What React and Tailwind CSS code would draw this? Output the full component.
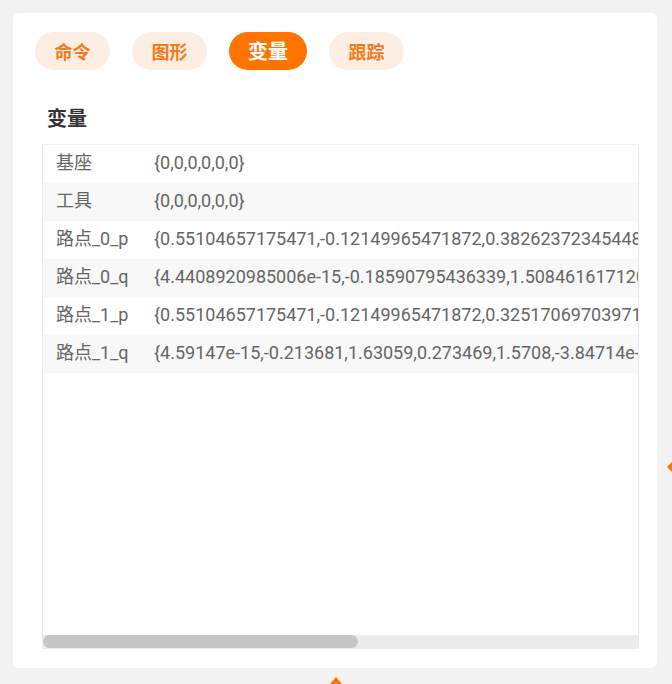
import React from 'react';

const tabs = ['命令', '图形', '变量', '跟踪'];

const rows = [
  ['基座', '{0,0,0,0,0,0}'],
  ['工具', '{0,0,0,0,0,0}'],
  ['路点_0_p', '{0.55104657175471,-0.12149965471872,0.38262372345448,3.1415926,0,1.5707963}'],
  ['路点_0_q', '{4.4408920985006e-15,-0.18590795436339,1.5084616171206,0.2483247,1.5708,0}'],
  ['路点_1_p', '{0.55104657175471,-0.12149965471872,0.32517069703971,3.1415926,0,1.5707963}'],
  ['路点_1_q', '{4.59147e-15,-0.213681,1.63059,0.273469,1.5708,-3.84714e-15}'],
];

export default function App() {
  return (
    <div
      className="relative h-[684px] w-[672px] overflow-hidden bg-[#f2f2f2] pt-[13px] pl-[13px]"
      style={{ fontFamily: 'Roboto, "Noto Sans CJK SC", sans-serif' }}
    >
      <div className="flex h-[655px] w-[644px] flex-col rounded-md bg-white pt-[19px] pl-[22px]">
        {/* tabs */}
        <div className="flex gap-[22px]">
          {tabs.map((t) => (
            <div
              key={t}
              className={`flex h-[38px] items-center justify-center rounded-full font-bold ${
                t === '变量'
                  ? 'w-[78px] bg-[#ff7300] text-[20px] text-white'
                  : 'w-[75px] bg-[#fdeee3] text-[18px] text-[#f57a1a]'
              }`}
              style={{ fontFamily: '"Noto Sans CJK SC", sans-serif' }}
            >
              {t}
            </div>
          ))}
        </div>

        <div
          className="mt-[34px] ml-[12px] text-[20px] font-bold leading-[28px] text-[#333]"
          style={{ fontFamily: '"Noto Sans CJK SC", sans-serif' }}
        >
          变量
        </div>

        {/* table */}
        <div className="mt-[12px] ml-[7px] flex h-[505px] w-[597px] flex-col overflow-hidden border border-[#e6ebf2] border-t-[#f0f2f5]">
          <div className="flex-1 overflow-hidden">
            {rows.map(([k, v], i) => (
              <div
                key={k}
                className={`flex h-[38px] items-center whitespace-nowrap pb-[3px] text-[18px] text-[#666] ${
                  i % 2 === 1 ? 'bg-[#f8f8f8]' : 'bg-white'
                }`}
              >
                <div className="w-[111px] shrink-0 pl-[13px]">{k}</div>
                <div>{v}</div>
              </div>
            ))}
          </div>
          {/* horizontal scrollbar */}
          <div className="h-[13px] w-full bg-[#ececec]">
            <div className="h-[13px] w-[315px] rounded-full bg-[#c6c6c6]" />
          </div>
        </div>
      </div>

      {/* splitter handles */}
      <div className="absolute bottom-0 left-[330px] h-0 w-0 border-x-[6px] border-b-[7px] border-x-transparent border-b-[#ff7300]" />
      <div className="absolute top-[462px] right-0 h-0 w-0 border-y-[5px] border-r-[5px] border-y-transparent border-r-[#ff7300]" />
    </div>
  );
}
